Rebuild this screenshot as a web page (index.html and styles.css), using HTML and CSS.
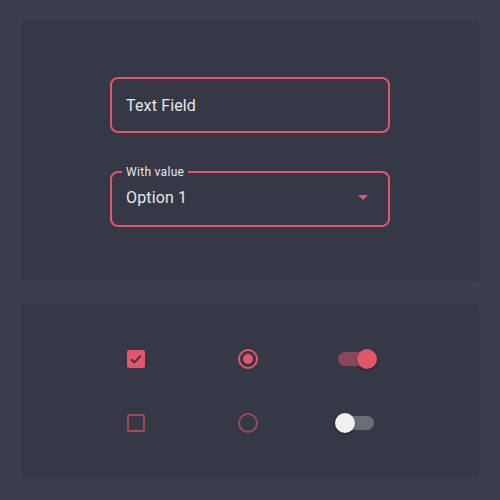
FILE: index.html
```html
<!DOCTYPE html>
<html>
<head>
<meta charset="utf-8">
<link rel="stylesheet" href="styles.css">
</head>
<body>
<div class="page">
  <section class="card card-fields">
    <div class="field">
      <span class="field-text">Text Field</span>
    </div>
    <div class="field select">
      <span class="field-label">With value</span>
      <span class="field-text">Option 1</span>
      <svg class="arrow" width="10" height="5" viewBox="0 0 10 5"><path d="M0 0h10L5 5z" fill="#e2566b"/></svg>
    </div>
  </section>
  <section class="card card-controls">
    <div class="cell"><span class="checkbox checked"><svg width="18" height="18" viewBox="0 0 18 18"><path d="M4 9.2l3.2 3.2L14 5.6" fill="none" stroke="#343945" stroke-width="2"/></svg></span></div>
    <div class="cell"><span class="radio checked"><span class="dot"></span></span></div>
    <div class="cell"><span class="switch on"><span class="thumb"></span></span></div>
    <div class="cell"><span class="checkbox"></span></div>
    <div class="cell"><span class="radio"></span></div>
    <div class="cell"><span class="switch"><span class="thumb"></span></span></div>
  </section>
</div>
</body>
</html>
```
FILE: styles.css
```css
html, body { margin: 0; padding: 0; }
body {
  background: #3a3f4b;
  font-family: Roboto, "Liberation Sans", sans-serif;
  width: 500px;
  height: 500px;
}
.page {
  padding: 21px;
  display: flex;
  flex-direction: column;
  gap: 23px;
}
.card {
  background: #343945;
  border-radius: 4px;
  width: 458px;
  box-sizing: border-box;
}
.card-fields {
  height: 260px;
  padding: 56px 0 0 89px;
  display: flex;
  flex-direction: column;
  gap: 38px;
}
.field {
  width: 280px;
  height: 56px;
  box-sizing: border-box;
  border: 2px solid #e2566b;
  border-radius: 8px;
  display: flex;
  align-items: center;
  padding: 0 14px;
  color: #e6e7ea;
}
.field-text {
  font-size: 16px;
  letter-spacing: 0.15px;
}
.select {
  position: relative;
  padding-bottom: 3px;
}
.select .field-label {
  position: absolute;
  top: -9px;
  left: 10px;
  padding: 0 4px;
  font-size: 12px;
  line-height: 16px;
  background: #343945;
  color: #e6e7ea;
  letter-spacing: 0.3px;
}
.arrow {
  margin-left: auto;
  margin-right: 6px;
}
.card-controls {
  height: 174px;
  display: grid;
  grid-template-columns: 110px 110px 110px;
  grid-template-rows: 64px 64px;
  justify-content: center;
  align-content: center;
}
.cell {
  display: flex;
  align-items: center;
  justify-content: center;
}
.cell:nth-child(3n+1) { padding-right: 8px; }
.cell:nth-child(3n+2) { padding-right: 4px; }
.cell:nth-child(3n) { padding-right: 8px; }
.checkbox {
  width: 18px;
  height: 18px;
  box-sizing: border-box;
  border: 2px solid #a0475a;
  border-radius: 2px;
  display: block;
}
.checkbox.checked {
  border: none;
  background: #e2566b;
}
.checkbox svg { display: block; }
.radio {
  width: 20px;
  height: 20px;
  box-sizing: border-box;
  border: 2px solid #a0475a;
  border-radius: 50%;
  display: flex;
  align-items: center;
  justify-content: center;
}
.radio.checked { border-color: #e2566b; }
.radio .dot {
  width: 10px;
  height: 10px;
  border-radius: 50%;
  background: #e2566b;
}
.switch {
  width: 36px;
  height: 14px;
  border-radius: 7px;
  background: #6a6e79;
  display: flex;
  align-items: center;
}
.switch.on {
  background: #8b4756;
  justify-content: flex-end;
}
.thumb {
  width: 20px;
  height: 20px;
  border-radius: 50%;
  background: #f1f1f1;
  margin-left: -3px;
  box-shadow: 0 1px 3px rgba(0,0,0,0.35);
}
.switch.on .thumb {
  background: #e2566b;
  margin-left: 0;
  margin-right: -3px;
}
```
